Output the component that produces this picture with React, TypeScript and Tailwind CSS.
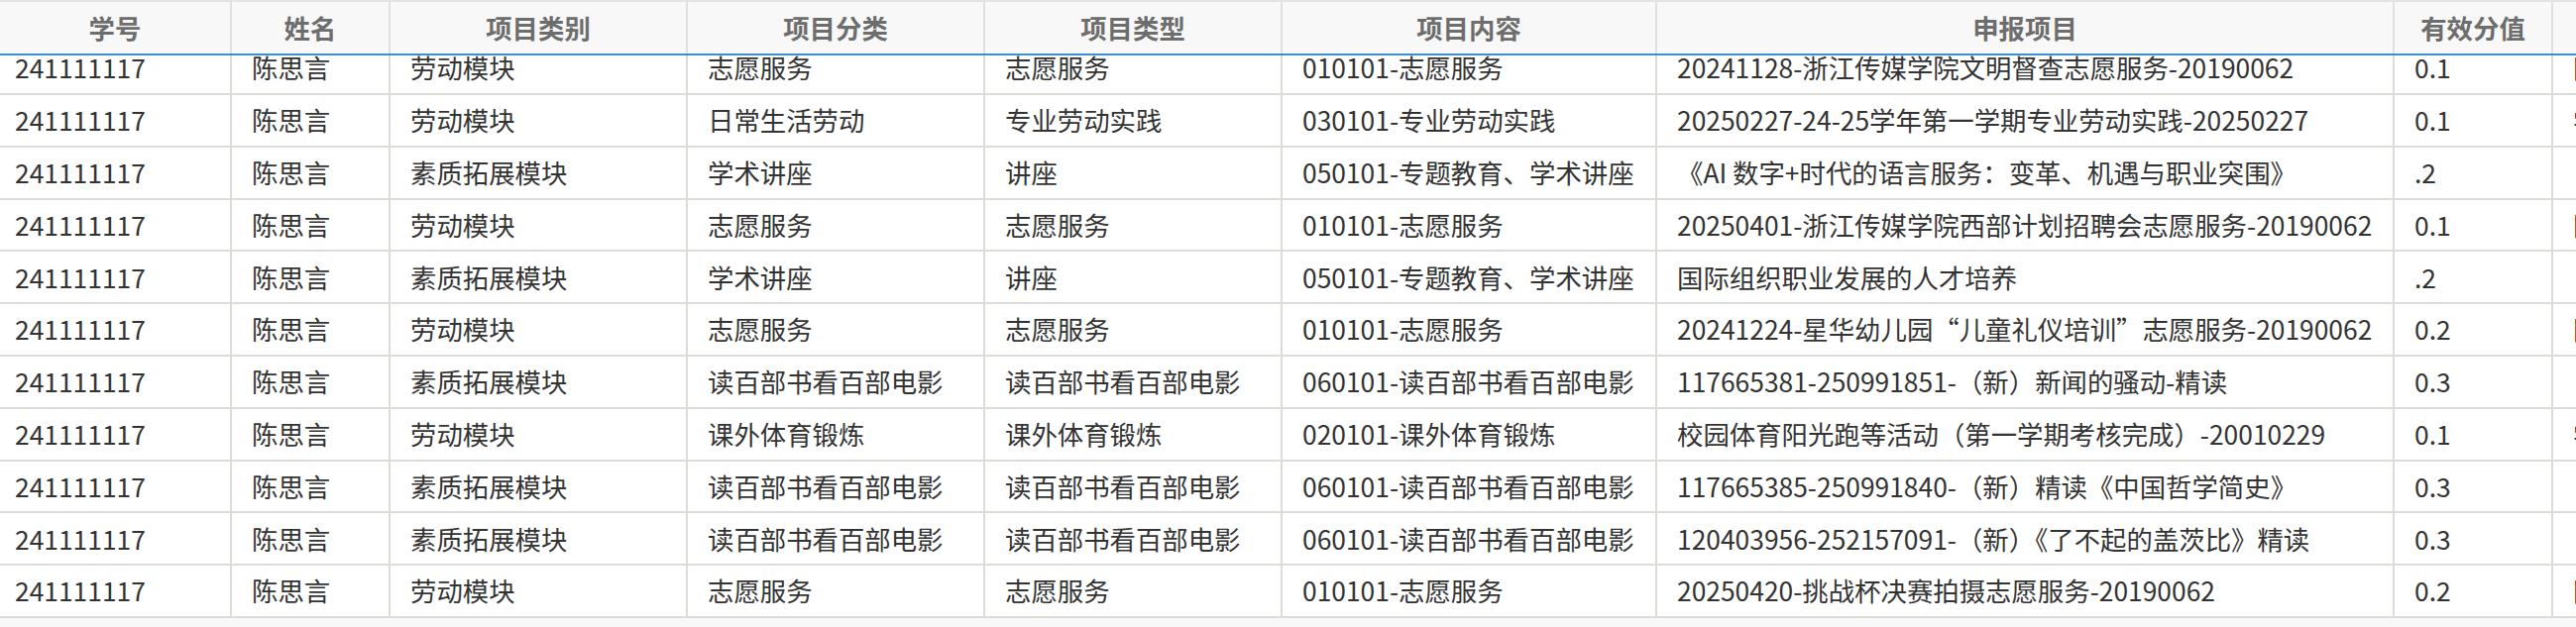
import React from "react";

const widths = ["w-[234px]", "w-[160px]", "w-[300px]", "w-[300px]", "w-[300px]", "w-[378px]", "w-[744px]", "w-[160px]", "w-[200px]"];
const pads = ["pl-[15px]", "pl-[20px]", "pl-[20px]", "pl-[20px]", "pl-[20px]", "pl-[20px]", "pl-[20px]", "pl-[20px]", "pl-[20px]"];

const headers = ["学号", "姓名", "项目类别", "项目分类", "项目类型", "项目内容", "申报项目", "有效分值", "备注"];

const rows: string[][] = [
  ["劳动模块", "志愿服务", "志愿服务", "010101-志愿服务", "20241128-浙江传媒学院文明督查志愿服务-20190062", "0.1", "国"],
  ["劳动模块", "日常生活劳动", "专业劳动实践", "030101-专业劳动实践", "20250227-24-25学年第一学期专业劳动实践-20250227", "0.1", "学"],
  ["素质拓展模块", "学术讲座", "讲座", "050101-专题教育、学术讲座", "《AI 数字+时代的语言服务：变革、机遇与职业突围》", ".2", ""],
  ["劳动模块", "志愿服务", "志愿服务", "010101-志愿服务", "20250401-浙江传媒学院西部计划招聘会志愿服务-20190062", "0.1", "国"],
  ["素质拓展模块", "学术讲座", "讲座", "050101-专题教育、学术讲座", "国际组织职业发展的人才培养", ".2", ""],
  ["劳动模块", "志愿服务", "志愿服务", "010101-志愿服务", "20241224-星华幼儿园“儿童礼仪培训”志愿服务-20190062", "0.2", "国"],
  ["素质拓展模块", "读百部书看百部电影", "读百部书看百部电影", "060101-读百部书看百部电影", "117665381-250991851-（新）新闻的骚动-精读", "0.3", ""],
  ["劳动模块", "课外体育锻炼", "课外体育锻炼", "020101-课外体育锻炼", "校园体育阳光跑等活动（第一学期考核完成）-20010229", "0.1", "学"],
  ["素质拓展模块", "读百部书看百部电影", "读百部书看百部电影", "060101-读百部书看百部电影", "117665385-250991840-（新）精读《中国哲学简史》", "0.3", ""],
  ["素质拓展模块", "读百部书看百部电影", "读百部书看百部电影", "060101-读百部书看百部电影", "120403956-252157091-（新）《了不起的盖茨比》精读", "0.3", ""],
  ["劳动模块", "志愿服务", "志愿服务", "010101-志愿服务", "20250420-挑战杯决赛拍摄志愿服务-20190062", "0.2", "国"],
];

export default function App() {
  return (
    <div
      className="w-[2599px] h-[633px] overflow-hidden bg-[#f8f8f8] text-[26.4px]"
      style={{ fontFamily: '"Noto Sans CJK SC", "Liberation Sans", sans-serif' }}
    >
      {/* header */}
      <div className="flex h-[56px] border-t-2 border-b-2 border-t-[#e4e4e4] border-b-[#3b8fd5] bg-[#f8f8f8]">
        {headers.map((h, i) => (
          <div
            key={i}
            className={`${widths[i]} shrink-0 h-full border-r-2 border-[#e0e0dc] flex items-center justify-center font-bold text-[#6d6d6d] leading-none whitespace-nowrap overflow-hidden`}
          >
            {h}
          </div>
        ))}
      </div>
      {/* body */}
      <div className="h-[568px] overflow-hidden">
        <div className="mt-[-12.8px] bg-white">
          {rows.map((r, ri) => {
            const cells = ["241111117", "陈思言", ...r];
            return (
              <div key={ri} className="flex h-[52.8px] border-b-2 border-[#dddcd6] box-border">
                {cells.map((c, ci) => (
                  <div
                    key={ci}
                    className={`${widths[ci]} ${pads[ci]} shrink-0 h-full border-r-2 border-[#dddcd6] flex items-center text-[#333333] leading-none whitespace-nowrap overflow-hidden`}
                  >
                    {c}
                  </div>
                ))}
              </div>
            );
          })}
        </div>
      </div>
    </div>
  );
}
